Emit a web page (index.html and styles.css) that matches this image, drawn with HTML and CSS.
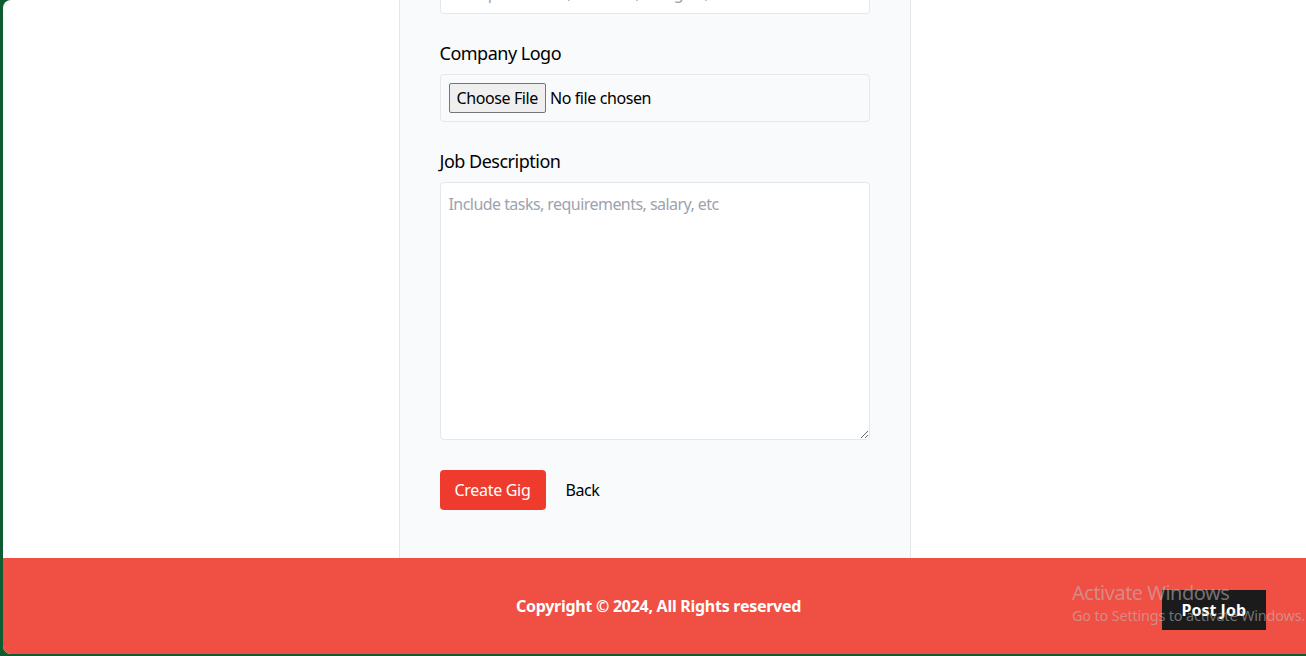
FILE: index.html
```html
<!DOCTYPE html>
<html lang="en">
<head>
<meta charset="utf-8">
<title>Create Gig</title>
<link rel="stylesheet" href="styles.css">
</head>
<body>
<div class="window">
  <main class="main">
    <div class="card">
      <div class="group">
        <input class="field" type="text" placeholder="Example: Laravel, Backend, Postgres, etc">
      </div>
      <div class="group">
        <label class="label">Company Logo</label>
        <div class="filebox"><input class="file" type="file"></div>
      </div>
      <div class="group">
        <label class="label">Job Description</label>
        <textarea class="area" placeholder="Include tasks, requirements, salary, etc"></textarea>
      </div>
      <div class="actions">
        <button class="btn-create">Create Gig</button>
        <a class="back" href="#">Back</a>
      </div>
    </div>
  </main>
  <footer class="footer">
    <p class="copy">Copyright &copy; 2024, All Rights reserved</p>
    <a class="post" href="#">Post Job</a>
    <div class="watermark">
      <div class="wm-title">Activate Windows</div>
      <div class="wm-sub">Go to Settings to activate Windows.</div>
    </div>
  </footer>
</div>
</body>
</html>
```

FILE: styles.css
```css
* { box-sizing: border-box; }
html, body { margin: 0; padding: 0; }
body {
  background: #0f5c31;
  height: 656px;
  overflow: hidden;
  font-family: "Noto Sans", "Open Sans", sans-serif;
  color: #000;
}
.window {
  margin-left: 3px;
  height: 654px;
  background: #fff;
  border-radius: 8px 0 0 8px;
  overflow: hidden;
  display: flex;
  flex-direction: column;
  position: relative;
}
.main {
  height: 558px;
  overflow: hidden;
  display: flex;
  justify-content: center;
}
.card {
  width: 512px;
  margin-top: -28px;
  padding: 0 40px 40px;
  background: #f9fafb;
  border-left: 1px solid #e5e7eb;
  border-right: 1px solid #e5e7eb;
}
.group { margin-bottom: 25px; }
.label {
  display: block;
  font-size: 18px;
  line-height: 28px;
  margin-bottom: 7px;
  letter-spacing: -0.5px;
}
.field {
  display: block;
  width: 100%;
  height: 42px;
  border: 1px solid #e5e7eb;
  border-radius: 4px;
  padding: 8px;
  font: inherit;
  font-size: 16px;
  letter-spacing: -0.5px;
  background: #fff;
}
.field::placeholder, .area::placeholder { color: #9ca3af; }
.filebox {
  height: 48px;
  border: 1px solid #e5e7eb;
  border-radius: 4px;
  padding: 8px;
  display: flex;
  align-items: center;
}
.file {
  font-family: inherit;
  font-size: 16px;
  letter-spacing: -0.4px;
  color: #000;
}
.file::file-selector-button {
  font-family: inherit;
  font-size: 16px;
  letter-spacing: -0.4px;
  height: 30px;
  padding: 0 7px;
  margin-right: 4px;
  background: #efefef;
  border: 1px solid #767676;
  border-radius: 2px;
  color: #000;
}
.area {
  display: block;
  width: 100%;
  height: 258px;
  border: 1px solid #e5e7eb;
  border-radius: 4px;
  padding: 9px 8px;
  font: inherit;
  font-size: 16px;
  line-height: 24px;
  letter-spacing: -0.55px;
  background: #fff;
  resize: vertical;
}
.actions {
  display: flex;
  align-items: center;
  margin-top: 30px;
}
.btn-create {
  height: 40px;
  width: 106px;
  background: #ef3b2d;
  color: #fff;
  border: 0;
  border-radius: 4px;
  font-family: inherit;
  font-size: 16px;
  letter-spacing: -0.3px;
}
.back {
  margin-left: 20px;
  color: #000;
  text-decoration: none;
  font-size: 16px;
  letter-spacing: -0.4px;
}
.footer {
  height: 96px;
  background: #f04f43;
  display: flex;
  align-items: center;
  justify-content: center;
  position: relative;
}
.copy {
  margin: 0;
  color: #fff;
  font-weight: 700;
  font-size: 16px;
  letter-spacing: -0.27px;
  padding-left: 8px;
}
.post {
  position: absolute;
  top: 32px;
  right: 40px;
  height: 40px;
  padding: 0 20px;
  display: flex;
  align-items: center;
  background: #1b1b1b;
  color: #fff;
  font-weight: 700;
  font-size: 16px;
  text-decoration: none;
}
.watermark {
  position: absolute;
  left: 1069px;
  top: 23px;
  white-space: nowrap;
  color: rgba(190, 190, 190, 0.55);
  pointer-events: none;
}
.wm-title { font-size: 20px; line-height: 24px; letter-spacing: -0.5px; }
.wm-sub { font-size: 14.5px; line-height: 20px; letter-spacing: -0.2px; }
```
